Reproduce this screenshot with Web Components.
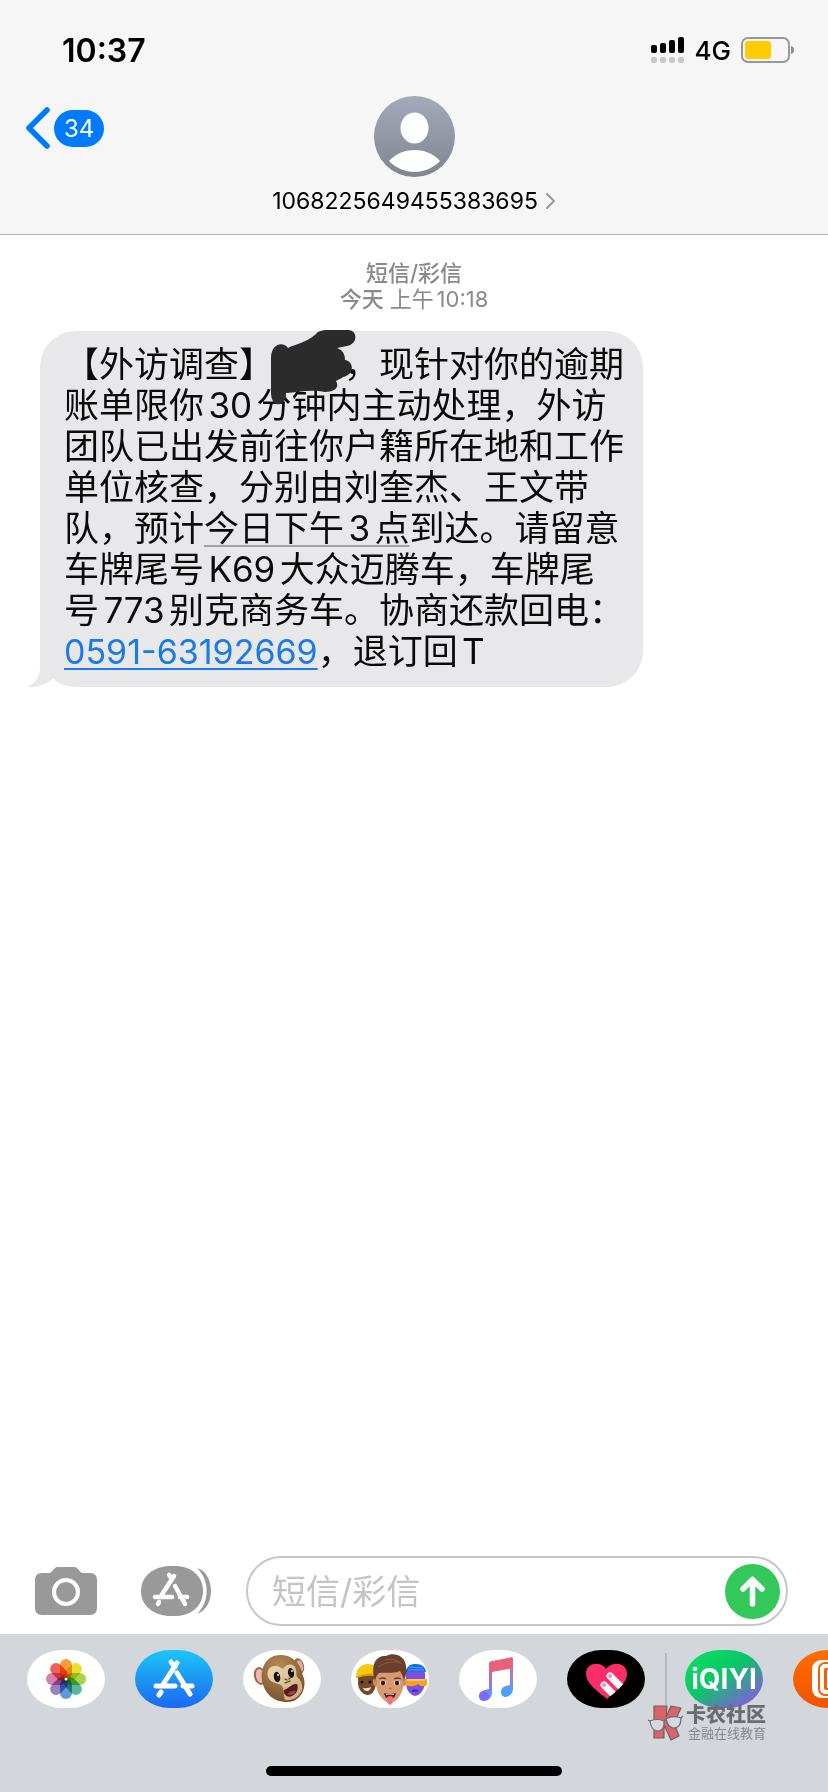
<!DOCTYPE html>
<html lang="zh-CN">
<head>
<meta charset="utf-8">
<meta name="viewport" content="width=device-width, initial-scale=1">
<title>短信</title>
<style>
  body {
    margin: 0;
    background: white;
    color: black;
    font-family: Inter, "Noto Sans CJK SC", sans-serif;
    overflow-x: hidden;
  }
</style>
</head>
<body>
<messages-app></messages-app>

<script>
// status-bar
class StatusBar extends HTMLElement {
  constructor(){
    super();
    this.attachShadow({ mode: 'open' });
    this.shadowRoot.innerHTML = `
    <style>
    :host {
      align-items: center;
      box-sizing: border-box;
      display: flex;
      height: 88px;
      justify-content: space-between;
      padding: 12px 33px 0 62px;
    }
    time {
      font-size: 32px;
      font-weight: 600;
    }
    .right {
      align-items: center;
      display: flex;
      font-size: 26px;
      font-weight: 500;
      gap: 10px;
    }
    svg {
      display: block;
    }
    </style>
    <time>10:37</time>
    <div class="right">
      <svg width="34" height="28" viewBox="0 0 34 28" aria-label="信号">
        <g fill="#000">
          <rect x="0" y="9" width="6" height="8" rx="2"/>
          <rect x="9" y="7" width="6" height="10" rx="2"/>
          <rect x="18" y="4" width="6" height="13" rx="2"/>
          <rect x="27" y="1" width="6" height="16" rx="2"/>
        </g>
        <g fill="#c8c8c8">
          <rect x="0" y="21" width="6" height="6" rx="2"/>
          <rect x="9" y="21" width="6" height="6" rx="2"/>
          <rect x="18" y="21" width="6" height="6" rx="2"/>
          <rect x="27" y="21" width="6" height="6" rx="2"/>
        </g>
      </svg>
      <span>4G</span>
      <svg width="54" height="26" viewBox="0 0 54 26" aria-label="电量">
        <rect x="1" y="1" width="47" height="24" rx="6" fill="none" stroke="#98989a" stroke-width="2"/>
        <rect x="4" y="4" width="26" height="18" rx="3" fill="#ffcc00"/>
        <path d="M50 9c4 1 4 7 0 8z" fill="#8a8a8c"/>
      </svg>
    </div>`;
  }
}

// chat-header
class ChatHeader extends HTMLElement {
  constructor(){
    super();
    this.attachShadow({ mode: 'open' });
    this.shadowRoot.innerHTML = `
    <style>
    :host {
      border-bottom: 1px solid #b4b4b6;
      display: grid;
      grid-template-columns: 1fr auto 1fr;
      padding: 8px 26px 18px;
    }
    button {
      background: none;
      border: none;
      color: inherit;
      cursor: pointer;
      font: inherit;
      padding: 0;
    }
    .back {
      align-items: center;
      align-self: start;
      display: flex;
      gap: 4px;
      justify-self: start;
      margin-top: 11px;
    }
    .unread {
      background: #007aff;
      border-radius: 19px;
      color: white;
      font-size: 24px;
      line-height: 37px;
      padding: 0 10px;
    }
    .contact {
      align-items: center;
      display: flex;
      flex-direction: column;
      gap: 9px;
    }
    .number {
      align-items: center;
      display: flex;
      font-size: 23px;
      gap: 8px;
      line-height: 30px;
    }
    svg {
      display: block;
    }
    </style>
    <button class="back" aria-label="返回">
      <svg width="24" height="42" viewBox="0 0 24 42"><path d="M21 3 3 21l18 18" fill="none" stroke="#007aff" stroke-width="5.5" stroke-linecap="round" stroke-linejoin="round"/></svg>
      <span class="unread"><slot name="unread"></slot></span>
    </button>
    <button class="contact">
      <svg width="81" height="81" viewBox="0 0 81 81">
        <defs>
          <linearGradient id="sky" x1="0" y1="0" x2="0" y2="1"><stop offset="0" stop-color="#a4aaba"/><stop offset="1" stop-color="#81858f"/></linearGradient>
        </defs>
        <circle cx="40.500" cy="40.500" r="40.500" fill="url(#sky)"/>
        <ellipse cx="40.500" cy="32" rx="14" ry="15.500" fill="#fff"/>
        <path d="M15 65C22 57 32 54 40.500 54S59 57 66 65C59 72 50 76 40.500 76S22 72 15 65z" fill="#fff"/>
      </svg>
      <span class="number"><slot></slot>
        <svg width="10" height="16" viewBox="0 0 10 16"><path d="M1 1l7 7-7 7" fill="none" stroke="#98989c" stroke-width="2" stroke-linecap="round" stroke-linejoin="round"/></svg>
      </span>
    </button>`;
  }
}

// thread-label
class ThreadLabel extends HTMLElement {
  constructor(){
    super();
    this.attachShadow({ mode: 'open' });
    this.shadowRoot.innerHTML = `
    <style>
    :host {
      color: #8a8a8e;
      display: block;
      font-size: 22px;
      line-height: 26px;
      text-align: center;
      text-autospace: normal;
    }
    .kind, .day {
      font-weight: 500;
    }
    </style>
    <div class="kind"><slot name="kind"></slot></div>
    <div><span class="day"><slot name="day"></slot></span> <slot></slot></div>`;
  }
}

// ink-scribble, hides a two character name
class InkScribble extends HTMLElement {
  constructor(){
    super();
    this.attachShadow({ mode: 'open' });
    this.shadowRoot.innerHTML = `
    <style>
    :host {
      display: inline-block;
      height: 1em;
      position: relative;
      vertical-align: top;
      width: 2em;
    }
    svg {
      left: -4px;
      position: absolute;
      top: -14px;
    }
    </style>
    <svg width="86" height="76" viewBox="0 0 86 76">
      <path d="M1 62V28C1 14 13 11 18 18 25 14 36 13 46 4 48 1 52 0 58 0H78C88 0 88 14 77 16L67 18C72 20 75 23 75 30 84 31 85 45 73 47 71 49 69 49 66 51 70 58 64 62 55 62 42 59 28 62 16 63 16 72 12 75 7 74 3 73 1 69 1 62z" fill="#2b2b2b"/>
    </svg>`;
  }
}

// message-bubble
class MessageBubble extends HTMLElement {
  constructor(){
    super();
    this.attachShadow({ mode: 'open' });
    this.shadowRoot.innerHTML = `
    <style>
    :host {
      background: #e8e8ea;
      border-radius: 36px;
      box-sizing: border-box;
      color: #0a0a0a;
      display: block;
      font-size: 35px;
      line-height: 41px;
      max-width: 603px;
      padding: 13px 0 15px 24px;
      position: relative;
      text-autospace: normal;
    }
    .tail {
      bottom: 0;
      left: -13px;
      position: absolute;
    }
    .text {
      margin: 0;
      position: relative;
    }
    ::slotted(a) {
      color: inherit;
      text-decoration: underline 2px #a2a2a6;
      text-underline-offset: 4px;
    }
    ::slotted(a.phone) {
      color: #1a7ae8;
      font-size: 34px;
      text-decoration-color: #1a7ae8;
    }
    </style>
    <svg class="tail" width="40" height="36" viewBox="0 0 40 36"><path d="M13 0V16C13 27 8 33 0 35.500 11 37 19 33 26 28L40 0z" fill="#e8e8ea"/></svg>
    <p class="text"><slot></slot></p>`;
  }
}

// message-composer
class MessageComposer extends HTMLElement {
  constructor(){
    super();
    this.attachShadow({ mode: 'open' });
    this.shadowRoot.innerHTML = `
    <style>
    :host {
      align-items: center;
      display: flex;
      padding: 0 40px 8px 35px;
    }
    button {
      background: none;
      border: none;
      cursor: pointer;
      flex: none;
      padding: 0;
    }
    svg {
      display: block;
    }
    .camera {
      margin-right: 44px;
    }
    .apps {
      margin-right: 35px;
    }
    .field {
      align-items: center;
      border: 2px solid #c6c6c8;
      border-radius: 35px;
      box-sizing: border-box;
      display: flex;
      flex: 1;
      height: 70px;
      min-width: 0;
      padding: 0 6px 0 24px;
    }
    input {
      background: none;
      border: none;
      flex: 1;
      font: inherit;
      font-size: 34px;
      min-width: 0;
      outline: none;
      padding: 0;
    }
    input::placeholder {
      color: #c4c4c7;
      opacity: 1;
    }
    </style>
    <button class="camera" aria-label="相机">
      <svg width="62" height="48" viewBox="0 0 62 48">
        <path d="M7 6H14C18 6 18 0 23 0H39C44 0 44 6 48 6H55Q62 6 62 13V41Q62 48 55 48H7Q0 48 0 41V13Q0 6 7 6z" fill="#999"/>
        <circle cx="31" cy="25" r="12" fill="none" stroke="#fff" stroke-width="4"/>
      </svg>
    </button>
    <button class="apps" aria-label="应用">
      <svg width="70" height="50" viewBox="0 0 70 50">
        <path d="M56 2C65 4 70 15 70 25S65 45 56 48C69 36 69 14 56 2z" fill="#999"/>
        <path d="M30 0H34C50 0 62 10 62 25S50 50 34 50H30C13 50 0 40 0 25S13 0 30 0z" fill="#999"/>
        <g fill="none" stroke="#fff" stroke-width="4.500" stroke-linecap="round">
          <path d="M33 10 20 30M28 9l3 4M14 31h17M39 31h7M34 20l10 18M18 36l-1 2"/>
        </g>
      </svg>
    </button>
    <div class="field">
      <input type="text" placeholder="短信/彩信" aria-label="短信/彩信">
      <button aria-label="发送">
        <svg width="55" height="55" viewBox="0 0 55 55">
          <circle cx="27.500" cy="27.500" r="27.500" fill="#34c759"/>
          <path d="M27.500 40V16M18 25l9.500-9.500L37 25" fill="none" stroke="#fff" stroke-width="5.500" stroke-linecap="round" stroke-linejoin="round"/>
        </svg>
      </button>
    </div>`;
  }
}

// app-tile
class AppTile extends HTMLElement {
  constructor(){
    super();
    this.attachShadow({ mode: 'open' });
    this.shadowRoot.innerHTML = `
    <style>
    :host {
      display: block;
      flex: none;
    }
    button {
      align-items: center;
      background: var(--tile, white);
      border: none;
      border-radius: 35px / 29px;
      color: white;
      cursor: pointer;
      display: flex;
      font: inherit;
      font-size: 28px;
      font-weight: 700;
      height: 58px;
      justify-content: center;
      overflow: hidden;
      padding: 0;
      width: 78px;
    }
    </style>
    <button><slot></slot></button>`;
  }
  connectedCallback(){
    this.shadowRoot.querySelector("button").setAttribute("aria-label", this.getAttribute("name"));
  }
}

// app-strip
class AppStrip extends HTMLElement {
  constructor(){
    super();
    this.attachShadow({ mode: 'open' });
    this.shadowRoot.innerHTML = `
    <style>
    :host {
      background: #d3d7dc;
      box-sizing: border-box;
      display: flex;
      flex-direction: column;
      height: 158px;
      justify-content: space-between;
      overflow: hidden;
      padding: 16px 0 16px 27px;
      position: relative;
    }
    .tiles {
      display: flex;
      gap: 30px;
    }
    .divider {
      background: #b4b8be;
      flex: none;
      height: 52px;
      margin: 3px -12px 0 -10px;
      width: 2px;
    }
    .home {
      align-self: center;
      background: black;
      border-radius: 5px;
      height: 10px;
      margin-left: -27px;
      width: 296px;
    }
    svg {
      display: block;
      flex: none;
    }
    site-mark {
      position: absolute;
      right: 62px;
      top: 71px;
    }
    </style>
    <div class="tiles">
      <app-tile name="照片">
        <svg width="78" height="58" viewBox="-39 -29 78 58">
          <g style="isolation:isolate">
            <g id="petals"></g>
          </g>
          <circle r="1.500" fill="#fff"/>
        </svg>
      </app-tile>
      <app-tile name="App Store" style="--tile: linear-gradient(#1cc5f8, #1b68f1)">
        <svg width="78" height="58" viewBox="0 0 78 58">
          <path d="M42 13 27 36M36 12l4 5M21 36h19M48 36h9M42 23l13 21M26 42l-2 3" fill="none" stroke="#fff" stroke-width="5" stroke-linecap="round"/>
        </svg>
      </app-tile>
      <app-tile name="拟我表情">
        <svg width="78" height="58" viewBox="0 0 78 58">
          <defs><radialGradient id="fur" cx=".4" cy=".25" r=".8"><stop offset="0" stop-color="#b58c55"/><stop offset="1" stop-color="#75502a"/></radialGradient>
          <linearGradient id="skin" x1="0" y1="0" x2="1" y2="1"><stop offset="0" stop-color="#f0d9b4"/><stop offset="1" stop-color="#c9a779"/></linearGradient></defs>
          <ellipse cx="17" cy="26" rx="6" ry="9" fill="#94703f" transform="rotate(-12 17 26)"/>
          <ellipse cx="17" cy="26" rx="4" ry="7" fill="#f3b3b8" transform="rotate(-12 17 26)"/>
          <ellipse cx="56" cy="16" rx="5" ry="8" fill="#94703f" transform="rotate(-14 56 16)"/>
          <ellipse cx="57" cy="16" rx="3" ry="6" fill="#e5a3a6" transform="rotate(-14 57 16)"/>
          <path d="M19 30C17 16 25 5 37 5S57 12 60 26C62 30 62 36 60 41 57 49 50 52 44 52 30 52 21 43 19 30z" fill="url(#fur)"/>
          <path d="M26 29C22 21 27 15 33 16 36 16 38 18 40 19 42 15 49 12 52 17 54 21 53 24 54 27 58 30 60 35 59 40 56 48 49 51 42 50 40 45 42 39 38 35 33 33 28 32 26 29z" fill="url(#skin)"/>
          <ellipse cx="34" cy="27" rx="3.200" ry="5.200" fill="#16130f" transform="rotate(-10 34 27)"/>
          <ellipse cx="48" cy="23" rx="3" ry="5" fill="#16130f" transform="rotate(-10 48 23)"/>
          <circle cx="35" cy="25" r="0.900" fill="#fff"/><circle cx="49" cy="21" r="0.900" fill="#fff"/>
          <path d="M42 29l2 1M47 28l-1 1M42 33q3-1 5-2" stroke="#5b3d22" stroke-width="1.300" fill="none" stroke-linecap="round"/>
          <path d="M41 40C45 39 49 33 54 34 56 38 54 44 49 46 45 48 40 45 41 40z" fill="#57191c"/>
          <path d="M44 44q4-4 9-3q-3 6-9 3z" fill="#95464f"/>
        </svg>
      </app-tile>
      <app-tile name="拟我表情贴纸">
        <svg width="78" height="58" viewBox="0 0 78 58">
          <path d="M7 25h18v10q-2 10-9 10Q8 43 7 34z" fill="#76482b"/>
          <path d="M5 27C5 19 10 14 17 14q6 0 8 4v8q-10-2-20 2z" fill="#f6c911"/>
          <path d="M5 27q10-5 20-3v2q-10-1-20 2z" fill="#d99d08"/>
          <circle cx="11" cy="32" r="1.500" fill="#1b1009"/><circle cx="19" cy="32" r="1.500" fill="#1b1009"/>
          <path d="M12 38q4 1 8-1-1 4-4 4-3 0-4-3z" fill="#f3e6dc"/>
          <path d="M55 20q4-6 14-4l5 7v12q-3 10-10 11-8-2-9-12z" fill="#7950e5"/>
          <path d="M55 21q2-8 10-7 9 0 10 8-10-1-20 0z" fill="#176ddf"/>
          <path d="M58 17l14 1M57 20l16 0" stroke="#4fa2ff" stroke-width="1"/>
          <path d="M54 29h22v6q-5 3-9-1-5 4-13 1z" fill="#f9a31b"/>
          <path d="M56 30h18" stroke="#ffd272" stroke-width="1.500"/>
          <path d="M61 41q3-1 6 0" stroke="#4c28a6" stroke-width="2" fill="none"/>
          <path d="M24 25C24 11 54 11 54 25L52 38C50 46 45 52 39 54 32 51 26 44 25 35z" fill="#d99a70"/>
          <ellipse cx="24" cy="32" rx="2" ry="4" fill="#cf8a63"/><ellipse cx="53" cy="32" rx="2" ry="4" fill="#cf8a63"/>
          <path d="M23 27C20 13 26 5 35 6 42 2 54 5 55 16 56 21 55 27 53 30 52 27 51 24 49 21 42 24 33 22 28 23 26 25 25 27 24 31z" fill="#69402b"/>
          <path d="M27 17q9-6 21-5M34 10q9-3 16 4" stroke="#865540" stroke-width="1.200" fill="none"/>
          <ellipse cx="32" cy="33" rx="3.200" ry="2.200" fill="#f6ece4"/><ellipse cx="46" cy="33" rx="3.200" ry="2.200" fill="#f6ece4"/>
          <circle cx="32" cy="33" r="2.200" fill="#35190c"/><circle cx="46" cy="33" r="2.200" fill="#35190c"/>
          <path d="M28 29q4-2 7 0M43 29q4-2 7 0" stroke="#69402b" stroke-width="1.300" fill="none"/>
          <path d="M38 38q1 1 3 0" stroke="#b66d4c" stroke-width="1.300" fill="none"/>
          <path d="M33 43q6 2 12 0-1 6-6 6-5 0-6-6z" fill="#5e1a1a"/>
          <path d="M35 44q4 1 8 0v1h-8z" fill="#fff"/>
          <path d="M36 47q3-2 6 0l-1 6q-2 4-4 0z" fill="#ee727b"/>
        </svg>
      </app-tile>
      <app-tile name="音乐">
        <svg width="78" height="58" viewBox="0 0 78 58">
          <defs><linearGradient id="note" gradientUnits="userSpaceOnUse" x1="46" y1="8" x2="38" y2="48"><stop offset="0" stop-color="#f75a67"/><stop offset=".35" stop-color="#db6795"/><stop offset=".7" stop-color="#9374ef"/><stop offset="1" stop-color="#4aa0fb"/></linearGradient>
          <linearGradient id="stem" gradientUnits="userSpaceOnUse" x1="0" y1="14" x2="0" y2="44"><stop offset="0" stop-color="#f06275"/><stop offset=".5" stop-color="#8a86e8"/><stop offset="1" stop-color="#43a4fb"/></linearGradient></defs>
          <path d="M30 14Q30 12 32 11.500L52 7.500Q54 7 54 9V18L33 22V42C33 48 29 51 25 51 22 51 20 49 20 46 20 40 27 40 30 39z" fill="url(#note)"/>
          <path d="M51 18V35C46 36 42 37 42 42 42 45 44 47 47 47 51 46 54 44 54 38V9z" fill="url(#stem)"/>
          <ellipse cx="25" cy="46" rx="5" ry="4.500" fill="#8566fb"/>
          <path d="M30 14Q30 12 32 11.500L52 7.500Q54 7 54 9V18L30 22z" fill="#e9607b"/>
        </svg>
      </app-tile>
      <app-tile name="Digital Touch" style="--tile: black">
        <svg width="78" height="58" viewBox="0 0 78 58">
          <defs><clipPath id="heart"><path d="M40 49C33 43 19 34 19 24 19 12 34 11 39 19 45 11 60 12 60 24 60 34 47 43 40 49z"/></clipPath></defs>
          <g clip-path="url(#heart)">
            <path d="M0 0h78v58H0z" fill="#fd2d69"/>
            <g stroke-linecap="round" stroke-width="7" stroke="#fff"><path d="M43 26 58 41M37 35 54 52"/></g>
            <circle cx="43" cy="26" r="2" fill="#fd8cab"/><circle cx="37" cy="35" r="2" fill="#fd8cab"/>
          </g>
        </svg>
      </app-tile>
      <span class="divider"></span>
      <app-tile name="iQIYI" style="--tile: linear-gradient(145deg, #0ddb63 10%, #0ac667 45%, #6d70c9 80%, #8b59dc)">iQIYI</app-tile>
      <app-tile name="视频" style="--tile: linear-gradient(#ff6d00, #f25300)">
        <svg width="78" height="58" viewBox="0 0 78 58">
          <rect x="19" y="10" width="40" height="38" rx="9" fill="#fff"/>
          <rect x="26" y="13" width="28" height="32" rx="6" fill="none" stroke="#f65f00" stroke-width="2"/>
          <rect x="31" y="18" width="18" height="22" rx="2" fill="#f65f00"/>
          <path d="M34 20h4v18h-4z" fill="#fff"/>
        </svg>
      </app-tile>
    </div>
    <div class="home"></div>
    <site-mark></site-mark>`;

    // eight overlapping petals of the photos flower
    const colors = ["#f7941d", "#e8dc12", "#9fce3c", "#45b390", "#4a90d6", "#8c72bd", "#d672a8", "#ef4f45"];
    this.shadowRoot.querySelector("#petals").innerHTML = colors.map((color, i) =>
      `<rect x="-6" y="-20" width="12" height="20" rx="6" fill="${color}" fill-opacity="0.9" style="mix-blend-mode:multiply" transform="rotate(${i * 45})"/>`
    ).join("");
  }
}

// site-mark
class SiteMark extends HTMLElement {
  constructor(){
    super();
    this.attachShadow({ mode: 'open' });
    this.shadowRoot.innerHTML = `
    <style>
    :host {
      align-items: center;
      color: #696c70;
      display: flex;
      gap: 3px;
      pointer-events: none;
    }
    .name {
      font-size: 20px;
      font-weight: 900;
      line-height: 20px;
    }
    .sub {
      color: #84878c;
      font-size: 13px;
      line-height: 16px;
      text-align: right;
    }
    </style>
    <svg width="35" height="36" viewBox="0 0 35 36">
      <g fill="#dc626c" stroke="#6b6265" stroke-width="1.200" stroke-linejoin="round">
        <path d="M6 1h13l-1 11 5-11 10 2-7 15 5 13-8 4-7-15v13H6z"/>
      </g>
      <g fill="#d5d8dc" stroke="#6b6e70" stroke-width="1.200">
        <path d="M2 16q7-3 14 0 1 10-7 10-6-1-7-10z"/>
        <path d="M18 14q7-4 15-1 0 10-7 10-6 0-8-9zM16 16l2-2M0 15l2 1M33 13l2-2"/>
      </g>
    </svg>
    <div>
      <div class="name">卡农社区</div>
      <div class="sub">金融在线教育</div>
    </div>`;
  }
}

// messages-app
class MessagesApp extends HTMLElement {
  constructor(){
    super();
    this.attachShadow({ mode: 'open' });
    this.shadowRoot.innerHTML = `
    <style>
    :host {
      display: flex;
      flex-direction: column;
      min-height: 100vh;
    }
    header {
      background: #f6f6f6;
    }
    main {
      flex: 1;
      padding: 25px 40px;
    }
    message-bubble {
      margin-top: 19px;
    }
    </style>
    <header>
      <status-bar></status-bar>
      <chat-header><span slot="unread">34</span>1068225649455383695</chat-header>
    </header>
    <main>
      <thread-label><span slot="kind">短信/彩信</span><span slot="day">今天</span>上午10:18</thread-label>
      <message-bubble>【外访调查】<ink-scribble></ink-scribble>，现针对你的逾期<br>账单限你30分钟内主动处理，外访<br>团队已出发前往你户籍所在地和工作<br>单位核查，分别由刘奎杰、王文带<br>队，预计<a href="#date">今日下午3点</a>到达。请留意<br>车牌尾号K69大众迈腾车，车牌尾<br>号773别克商务车。协商还款回电：<br><a class="phone" href="tel:059163192669">0591-63192669</a>，退订回T</message-bubble>
    </main>
    <message-composer></message-composer>
    <app-strip></app-strip>`;
  }
}

customElements.define('status-bar', StatusBar);
customElements.define('chat-header', ChatHeader);
customElements.define('thread-label', ThreadLabel);
customElements.define('ink-scribble', InkScribble);
customElements.define('message-bubble', MessageBubble);
customElements.define('message-composer', MessageComposer);
customElements.define('app-tile', AppTile);
customElements.define('site-mark', SiteMark);
customElements.define('app-strip', AppStrip);
customElements.define('messages-app', MessagesApp);
</script>
</body>
</html>
